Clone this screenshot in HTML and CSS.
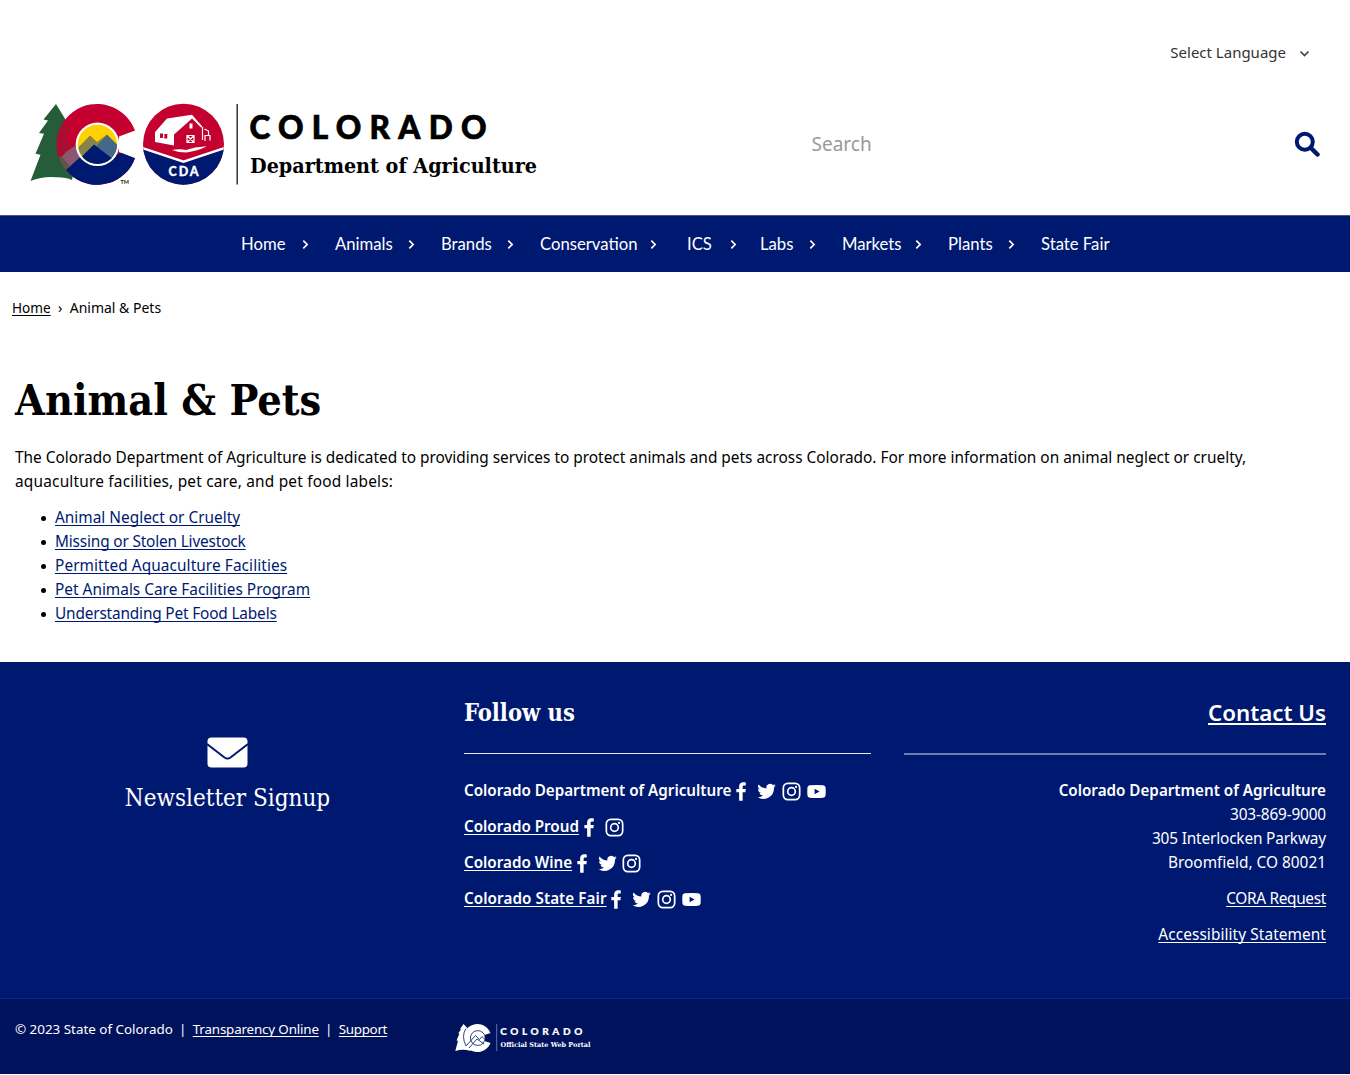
FILE: index.html
```html
<!DOCTYPE html>
<html lang="en">
<head>
<meta charset="utf-8">
<title>Animal &amp; Pets | Department of Agriculture</title>
<link rel="stylesheet" href="styles.css">
</head>
<body>
<svg class="sprite" aria-hidden="true">
  <symbol id="chev" viewBox="0 0 8 10"><path d="M2 1.500 5.500 5 2 8.500" fill="none" stroke="currentColor" stroke-width="1.500"/></symbol>
  <symbol id="fb" viewBox="0 0 20 20"><path d="M7.500 19.800V10.800H4.600V7.400h2.900V4.700C7.500 2 9 .3 11.800.3c1.200 0 2.200.1 2.700.2v3.200h-2c-1 0-1.300.6-1.300 1.400v2.300h3.300l-.4 3.400h-2.900v9z" fill="currentColor"/></symbol>
  <symbol id="tw" viewBox="0 0 24 24"><path d="M23.800 4.500a9 9 0 0 1-2.800.8 4.700 4.700 0 0 0 2.100-2.600 9 9 0 0 1-3 1.100 4.800 4.800 0 0 0-8.200 4.400A13.500 13.500 0 0 1 2 3.100a4.800 4.800 0 0 0 1.500 6.400 4.700 4.700 0 0 1-2.100-.6 4.800 4.800 0 0 0 3.800 4.800 4.700 4.700 0 0 1-2.100.1 4.800 4.800 0 0 0 4.500 3.300A9.600 9.600 0 0 1 .5 19.100a13.500 13.500 0 0 0 20.900-12.100 9.600 9.600 0 0 0 2.400-2.500z" fill="currentColor"/></symbol>
  <symbol id="ig" viewBox="0 0 20 20"><rect x="1.400" y="1.400" width="17.200" height="17.200" rx="4.800" fill="none" stroke="currentColor" stroke-width="1.800"/><circle cx="10" cy="10" r="4" fill="none" stroke="currentColor" stroke-width="1.800"/><circle cx="14.800" cy="5.200" r="1.200" fill="currentColor"/></symbol>
  <symbol id="yt" viewBox="0 0 20 20"><path fill-rule="evenodd" d="M3 3.300Q10 2.900 17 3.300 19.400 3.500 19.600 6q.2 4 0 8-.2 2.500-2.600 2.700-7 .4-14 0Q.6 16.500.4 14q-.2-4 0-8Q.6 3.500 3 3.300zM8 7v6l5.200-3z" fill="currentColor"/></symbol>
</svg>

<header class="header">
  <div class="lang"><span>Select Language</span><svg width="11" height="8" viewBox="0 0 11 8"><path d="M1.500 1.500 5.500 5.500 9.500 1.500" fill="none" stroke="#444" stroke-width="1.700"/></svg></div>
  <div class="brand">
    <svg class="logo" viewBox="30 100 510 90" width="510" height="90" role="img" aria-label="Colorado Department of Agriculture">
      <defs>
        <clipPath id="cshape"><path d="M135 130.500A40.400 40.400 0 1 0 135 158.300L119 152V136.500z"/></clipPath>
        <clipPath id="sun"><circle cx="97.500" cy="144.300" r="19.600"/></clipPath>
        <clipPath id="seal"><circle cx="183.500" cy="144.200" r="40.500"/></clipPath>
        <path id="tree" d="M56 104 43.500 119.500l4.500 1-9 12.500 5 .8-8.500 20 5 1L30.500 181Q43 176 56 177.200 66 177 72 180L78 150 71 134 67 122z"/>
      </defs>
      <use href="#tree" fill="#245d38"/>
      <g clip-path="url(#cshape)">
        <path d="M50 100h90v90H50z" fill="#c3002f"/>
        <path d="M56 104 60.500 111 65 118 63 121 70 131 66 134 71 150 40 165V110z" fill="#a80f32"/>
        <path d="M55 164 66 152 92 134l20 22-43 27z" fill="#8b5771"/>
        <path d="M50 163 61 156 69 165 66 182 50 190z" fill="#5c5548"/>
        <path d="M66 170 94 144.500l16 12 31-10v45H73z" fill="#001970"/>
      </g>
      <circle cx="97.500" cy="144.300" r="21.800" fill="#fff"/>
      <g clip-path="url(#sun)">
        <path d="M75 122h45v44H75z" fill="#ffd100"/>
        <path d="M70 156 90 135.500 97 142 107 134.500 122 149V168H70z" fill="#878349"/>
        <path d="M96 147 107 135 120 148V160H106z" fill="#45678a"/>
        <path d="M70 168 94 144.500 118 163V170H70z" fill="#001970"/>
      </g>
      <text x="120.500" y="183.500" class="tm" textLength="8.500">TM</text>
      <g clip-path="url(#seal)">
        <path d="M140 100h90v90h-90z" fill="#c3002f"/>
        <path d="M140 147.500 183.500 161.500 227 147.500V190H140z" fill="#001970"/>
        <path d="M140 147.300 183.500 161.700 227 147.300" fill="none" stroke="#fff" stroke-width="2.400"/>
      </g>
      <path d="M155.500 131.500 167 118.500l25-3.700 10.500 12-1.500.8-9-9-9.500 8.500-8.500 7.500V145.500l-19-3.500v-9.500z" fill="#fff"/>
      <path d="M160 133.500h3v4.500h-3zM164.300 134h3v4.500h-3z" fill="#c3002f"/>
      <path d="M189.500 123.500h3v5h-3z" fill="#fff"/>
      <path d="M187 135.500h7v7h-7zM187 135.500l7 7M194 135.500l-7 7M202.500 127V140M204.500 129l4 2V135M204.500 135.500h5.500v5M205 141v-5.500" fill="none" stroke="#fff" stroke-width="1.200"/>
      <path d="M172 150q8-1.500 14 0l9-2.500 12-1.200q-10 5-20.500 6.200-8 0-14.500-2.500z" fill="#fff"/>
      <text x="168.500" y="176.300" class="cda" textLength="30">CDA</text>
      <path d="M237.200 104V184.500" stroke="#333" stroke-width="1.500"/>
      <text x="249.500" y="138.500" class="wordmark" textLength="237">COLORADO</text>
      <text x="250" y="172.500" class="dept" textLength="287" lengthAdjust="spacingAndGlyphs">Department of Agriculture</text>
    </svg>
    <div class="search"><span>Search</span><svg width="26" height="26" viewBox="0 0 26 26"><circle cx="10.800" cy="10.800" r="8" fill="none" stroke="#001970" stroke-width="4"/><path d="M17 17 23.500 23.500" stroke="#001970" stroke-width="4.500" stroke-linecap="round"/></svg></div>
  </div>
</header>

<nav class="nav">
  <a>Home<svg><use href="#chev"/></svg></a><a>Animals<svg><use href="#chev"/></svg></a><a>Brands<svg><use href="#chev"/></svg></a><a class="long">Conservation<svg><use href="#chev"/></svg></a><a class="short">ICS<svg><use href="#chev"/></svg></a><a>Labs<svg><use href="#chev"/></svg></a><a>Markets<svg><use href="#chev"/></svg></a><a>Plants<svg><use href="#chev"/></svg></a><a class="last">State Fair</a>
</nav>

<main class="main">
  <div class="crumbs"><a class="u">Home</a><span class="sep">›</span><span>Animal &amp; Pets</span></div>
  <h1>Animal &amp; Pets</h1>
  <p class="intro">The Colorado Department of Agriculture is dedicated to providing services to protect animals and pets across Colorado. For more information on animal neglect or cruelty, <br><span class="loose">aquaculture facilities, pet care, and pet food labels:</span></p>
  <ul class="links">
    <li><a class="u">Animal Neglect or Cruelty</a></li>
    <li><a class="u snug">Missing or Stolen Livestock</a></li>
    <li><a class="u airy">Permitted Aquaculture Facilities</a></li>
    <li><a class="u">Pet Animals Care Facilities Program</a></li>
    <li><a class="u snug">Understanding Pet Food Labels</a></li>
  </ul>
</main>

<footer>
  <div class="foot">
    <section class="news">
      <svg width="41" height="31" viewBox="0 0 41 31"><rect x=".5" y=".5" width="40" height="30" rx="4" fill="#fff"/><path d="M0 7 17.500 20.500q3 2.200 6 0L41 7" fill="none" stroke="#001970" stroke-width="2"/></svg>
      <div class="signup">Newsletter Signup</div>
    </section>
    <section class="follow">
      <h2>Follow us</h2>
      <div class="social"><b>Colorado Department of Agriculture</b><svg><use href="#fb"/></svg><svg><use href="#tw"/></svg><svg><use href="#ig"/></svg><svg><use href="#yt"/></svg></div>
      <div class="social"><b class="u">Colorado Proud</b><svg><use href="#fb"/></svg><svg><use href="#ig"/></svg></div>
      <div class="social"><b class="u">Colorado Wine</b><svg><use href="#fb"/></svg><svg><use href="#tw"/></svg><svg><use href="#ig"/></svg></div>
      <div class="social"><b class="u airy">Colorado State Fair</b><svg><use href="#fb"/></svg><svg><use href="#tw"/></svg><svg><use href="#ig"/></svg><svg><use href="#yt"/></svg></div>
    </section>
    <section class="contact">
      <h2><a class="u">Contact Us</a></h2>
      <p><b>Colorado Department of Agriculture</b><br><span class="snug">303-869-9000</span><br><span class="snug">305 Interlocken Parkway</span><br>Broomfield, CO 80021</p>
      <p><a class="u tight">CORA Request</a></p>
      <p><a class="u airy">Accessibility Statement</a></p>
    </section>
  </div>
  <div class="legal">
    <div class="copy"><span>© 2023 State of Colorado</span><i>|</i><a class="u snug">Transparency Online</a><i>|</i><a class="u tight">Support</a></div>
    <svg width="137" height="30" viewBox="0 0 137 30" role="img" aria-label="Colorado Official State Web Portal">
      <path d="M8.500 1 5 6l1 .2L3.200 10.500l1.200.2L1.500 17.500l1.500.2L.3 28q8-2.500 15 0L19 12z" fill="#fff"/>
      <path d="M35.500 10A14 14 0 1 0 35.500 20L29.500 18V12z" fill="#fff"/>
      <circle cx="22.800" cy="15" r="7.400" fill="#fff" stroke="#00125c" stroke-width=".8"/>
      <path d="M11 5.500Q6 13 11 23M11 23 20.500 12.500l4 4 2.500-3 3 3M14 25l8-9 7 5" fill="none" stroke="#00125c" stroke-width=".8"/>
      <path d="M41.700 1V28" stroke="#7d88b8" stroke-width=".8"/>
      <text x="45.300" y="12.300" class="m-word" textLength="82">COLORADO</text>
      <text x="45.500" y="24.300" class="m-sub" textLength="90" lengthAdjust="spacingAndGlyphs">Official State Web Portal</text>
    </svg>
  </div>
</footer>
</body>
</html>
```
FILE: styles.css
```css
*{box-sizing:border-box}
body{margin:0;background:#fff;color:#000;font:15.4px/24px "Noto Sans",sans-serif}
.sprite{position:absolute;width:0;height:0}
.u{text-decoration:underline;text-decoration-thickness:1px;text-underline-offset:1.500px;text-decoration-skip-ink:none}
b{font-weight:600;font-size:15.2px}
.snug{letter-spacing:-.17px}
.tight{letter-spacing:-.32px}
.airy{letter-spacing:.08px}
.loose{letter-spacing:.2px}

.header{height:215px;padding:40px 30px 0}
.lang{display:flex;justify-content:flex-end;align-items:center;gap:13px;height:24px;padding-right:10px;color:#333;font-size:15px}
.lang svg{margin-top:3px}
.brand{display:flex;align-items:center;justify-content:space-between;height:90px;margin-top:36px}
.search{display:flex;align-items:center;justify-content:space-between;width:508.500px;margin-bottom:2px;color:#999;font-size:19px}
.wordmark{font:900 31.500px Lato,sans-serif;fill:#000;stroke:#000;stroke-width:.7px}
.dept{font:700 21.300px "DejaVu Serif Condensed","DejaVu Serif",serif;fill:#000}
.cda{font:900 12.500px Lato,sans-serif;fill:#fff;stroke:#fff;stroke-width:.3px}
.tm{font:700 5.500px Lato,sans-serif;fill:#222}

.nav{display:grid;grid-template-columns:94px 106px 99px 147px 73px 82px 106px 93px 69px;height:57px;padding-left:241px;border-top:1px solid #4a5590;background:#001970;color:#fff;font:16.700px/56px Lato,sans-serif;white-space:nowrap}
.nav a{display:flex;align-items:center;justify-content:space-between;padding-right:25px}
.nav .long{padding-right:29px}
.nav .short{padding-right:22px}
.nav .last{padding-right:0}
.nav svg{width:9px;height:11px;margin-top:1px}

.main{height:390px;padding:24px 15px 0}
.crumbs{display:flex;margin-left:-3px;font-size:14px}
.crumbs a{font-size:13.600px}
.sep{width:19px;text-align:center}
h1{margin:50px 0 0;font:700 42.800px/60px "DejaVu Serif Condensed","DejaVu Serif",serif}
.intro{margin:16px 0 12px;white-space:nowrap}
.links{margin:0;padding:0;list-style:none}
.links li{display:flex;align-items:center}
.links li::before{content:"";width:5px;height:5px;margin:0 9px 0 26px;border-radius:50%;background:#000}
.links a{color:#001970}

footer{color:#fff}
.foot{display:grid;grid-template-columns:455px 407px 422px;column-gap:0;height:336px;background:#001970}
.news{padding-top:75px;text-align:center}
.news svg{display:block;margin:0 auto}
.signup{margin-top:14px;font:24px/32px "DejaVu Serif Condensed","DejaVu Serif",serif}
.foot h2{height:62px;margin:0 0 24px;padding-top:4px;border-bottom:1px solid #e8ebf7;line-height:32px}
.follow{width:407px;margin-left:9px;padding-top:30px}
.follow h2{font:700 23.500px/34px "DejaVu Serif Condensed","DejaVu Serif",serif}
.social{display:flex;align-items:center;height:24px;margin-bottom:12px;white-space:nowrap}
.social svg{width:19px;height:19px;margin:2px 5.800px 0 0}
.social b+svg{margin-left:.8px}
.contact{width:422px;margin-left:42px;padding-top:30px;text-align:right}
.foot .contact h2{border-bottom:2px solid #6f7db6;height:63px;margin-bottom:23px;font-size:22.300px;font-weight:600;line-height:33px}
.contact h2 .u{text-decoration-thickness:2px}
.contact p{margin:0 0 12px}
.legal{display:grid;grid-template-columns:440px 1fr;height:76px;padding:18px 15px 0;border-top:1px solid #10277b;background:#00125c;font-size:13.400px}
.copy{display:flex;align-items:flex-start}
.copy i{width:20px;text-align:center;font-style:normal}
.legal svg{margin-top:6px}
.m-word{font:900 10px Lato,sans-serif;fill:#fff;stroke:#fff;stroke-width:.2px}
.m-sub{font:700 6.800px "DejaVu Serif Condensed","DejaVu Serif",serif;fill:#fff}
```
